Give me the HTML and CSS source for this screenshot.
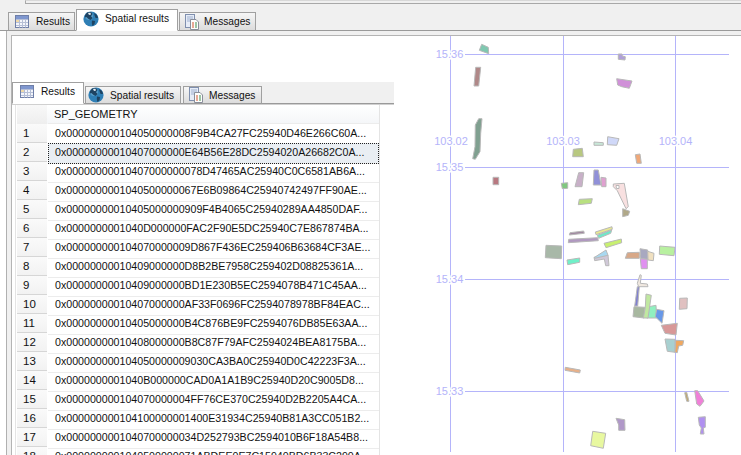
FILE: index.html
```html
<!DOCTYPE html>
<html lang="en">
<head>
<meta charset="utf-8">
<title>Spatial results</title>
<link rel="stylesheet" href="styles.css">
</head>
<body>
<svg class="defs" width="0" height="0" aria-hidden="true">
  <symbol id="i-grid" viewBox="0 0 14 13">
    <rect x="0.5" y="0.5" width="13" height="12" fill="#f4f6fb" stroke="#6f7fa8"/>
    <rect x="1" y="1" width="12" height="3" fill="#7f97cf"/>
    <path d="M1 4.5H13M1 7.5H13M1 10.5H13M4.5 4V12.5M7.5 4V12.5M10.5 4V12.5" stroke="#b6bfd6" fill="none"/>
    <rect x="1" y="5" width="3" height="2" fill="#f0d9a8"/>
  </symbol>
  <symbol id="i-globe" viewBox="0 0 16 16">
    <circle cx="8" cy="8" r="7.6" fill="#2f7fb5"/>
    <circle cx="6" cy="5" r="4" fill="#6fb0d6" opacity=".6"/>
    <path d="M4 1.6 8 1 9.5 3 8 5.2 9.6 7 7.5 9 5.6 8 3.4 6 2 6.5 2 4.2ZM9 9.5 12 10 11.6 13 9.4 15 8.800 12ZM11 2 14 4 15 7 12.6 7 11.6 4.6Z" fill="#1e4362"/>
    <path d="M5 2 7.5 1.8 8 3.4 6 4Z" fill="#e6eef4"/>
  </symbol>
  <symbol id="i-msg" viewBox="0 0 14 16">
    <rect x="0.5" y="0.5" width="9" height="13" fill="#e6ecf7" stroke="#7f8fae"/>
    <path d="M2 3H8M2 5H8M2 7H6" stroke="#9fb0cf" fill="none"/>
    <path d="M5.5 5.5H11L13.5 8V15.5H5.5Z" fill="#fdfdfd" stroke="#8a8f9a"/>
    <path d="M7 9H9M7 11H9M7 13H9" stroke="#d2542e" fill="none"/>
    <path d="M10 9H12M10 11H12M10 13H12" stroke="#3f8f4f" fill="none"/>
  </symbol>
</svg>

<div class="window">
  <div class="top-strip"><div class="top-rule"></div></div>
  <div class="tabs tabs-outer">
    <div class="tab"><svg class="icon icon-grid"><use href="#i-grid"/></svg>Results</div>
    <div class="tab tab-active"><svg class="icon icon-globe"><use href="#i-globe"/></svg>Spatial results</div>
    <div class="tab"><svg class="icon icon-msg"><use href="#i-msg"/></svg>Messages</div>
  </div>
  <div class="tabs-gap"><div class="tabs-gap-inner"></div></div>

  <div class="frame">
    <div class="canvas">
      <svg class="map" viewBox="0 0 741 455" width="741" height="455">
        <g class="grid-lines">
          <path d="M450.5 36V452M563.5 36V452M675.5 36V452"/>
          <path d="M465 54.500H729M465 167.500H729M465 279.500H729M465 391.500H729"/>
        </g>
        <g class="plots">
          <polygon fill="#7fc8b0" points="481.7,44.3 488.3,47.3 488.7,53.7 479.3,50.300"/>
          <polygon fill="#b08888" points="475.7,67.300 480.7,67.300 478.7,86 474,86"/>
          <polygon fill="#80a090" points="478.7,118.700 482,118.700 480.7,133.300 480,151.700 475.3,159.300 472.7,158.700 475,146.700 475.3,125"/>
          <polygon fill="#b0a0d8" points="618.3,54 622,54 622.3,56 625.3,56.700 625,60 618.3,59.300"/>
          <polygon fill="#d090d8" points="616.7,78.700 632,81 629.3,88.300 621.7,86.700 617.7,85"/>
          <polygon fill="#c8e8d8" points="594,142 603.3,142.700 603.3,145.300 594,145.300"/>
          <polygon fill="#d0d8f8" points="607.7,136.700 619,138.700 616.7,145.300 607.3,144.700"/>
          <polygon fill="#f0a878" points="635.3,154.700 640,154 641.3,163.300 636.7,163.300"/>
          <polygon fill="#b8c880" points="573.3,149.300 582.3,148.300 583.3,156.700 572.700,156.700"/>
          <polygon fill="#b87880" points="493,177.300 498.7,177.300 498.7,184.700 493,184.700"/>
          <polygon fill="#80c880" points="561.3,183.300 567.7,182.700 567.7,188.300 562.3,188.700"/>
          <polygon fill="#c8b0c8" points="578.7,172.700 583.7,172.700 582,186.700 575,186.700"/>
          <polygon fill="#9090d8" points="594,170 598.3,170 601,185 593.3,185"/>
          <polygon fill="#e0a0d0" points="601,177.300 606,178 606,186.700 601.700,186.700"/>
          <polygon fill="#f8e0e0" points="613.3,184 624.3,183.300 628.3,206.700 626,208.700 617.3,190.700 613.3,186.700"/>
          <polygon fill="#ffffff" points="616,185.500 619,185.500 619,188.500 616.500,188.500"/>
          <polygon fill="#b0a888" points="622.7,208.700 629.7,211.300 628.300,215.300 622.700,216.700"/>
          <polygon fill="#b8e080" points="579.3,199.300 592.3,198.700 591.3,203.300 578.3,204.700"/>
          <polygon fill="#a088a0" points="570,232.700 583.7,231 584.3,233.300 569.3,235"/>
          <polygon fill="#e8e890" points="595.3,232 612,226.700 612.3,229.300 596,234.700"/>
          <polygon fill="#70e8c8" points="597.3,235.300 611.7,230 610.7,233.300 598.7,238.300"/>
          <polygon fill="#b098c0" points="568.7,239.300 597.7,237.700 598.3,240.700 568.3,242.700"/>
          <polygon fill="#c8f070" points="604,243.300 621.3,239 621.7,242.700 606,247.700"/>
          <polygon fill="#a8b8a8" points="546,245.300 561.7,246 561.3,258.700 545.3,257.700"/>
          <polygon fill="#70f0c8" points="567,260 579.7,258 579.7,262.300 567.7,264.700"/>
          <polygon fill="#d0c8d8" points="594,257.300 608,255 609,265.700 605.7,265.700 604.3,259 594.7,260.700"/>
          <polygon fill="#a8d8f0" points="594,257.700 606,250 608,255.300 594.700,258.300"/>
          <polygon fill="#d8a888" points="627.3,252.700 639.3,252.300 639.300,258.300 625.300,258.300"/>
          <polygon fill="#a8a8c0" points="640,248.700 647.7,250 648,259.300 640.700,258.700"/>
          <polygon fill="#f0e0c0" points="647.7,251.300 654,253.300 653.300,260.700 648,260"/>
          <polygon fill="#e090f0" points="640.3,258.700 647.300,259.300 647.300,268.700 641.300,268.700"/>
          <polygon fill="#b8f0a0" points="659.7,246 675,247.300 674,255.700 659.300,254.300"/>
          <polygon fill="#f0e8e0" points="640,274.700 641.300,275.300 640.300,283.300 647.300,284 648,286.700 638.700,286.700 637.300,283.300"/>
          <polygon fill="#8080d0" points="637.300,286.700 639.300,286.700 637.700,306 634.700,306"/>
          <polygon fill="#a8b8a0" points="634,306.700 645.300,307.300 644,318 633,316.700"/>
          <polygon fill="#90f0c0" points="648.700,306.700 656,305.300 656.700,318 646.700,318"/>
          <polygon fill="#c0e8a0" points="646,294 651.300,295.300 648,318 643.300,318 645.300,307.300"/>
          <polygon fill="#6898e8" points="656.700,309.300 664,310.700 662,323.300 655.300,316.700"/>
          <polygon fill="#d89898" points="661.300,325.300 677.300,323.300 676,335 665,333.300"/>
          <polygon fill="#a8d0d0" points="665,339 675,339.300 675,352.300 667.300,351.300"/>
          <polygon fill="#f0a860" points="675.700,340.300 683.700,340.700 682.700,345.300 678.700,346 677.300,352.700 675,352.300"/>
          <polygon fill="#e0c0c0" points="679.700,298.300 687.300,298 687,308.700 679.300,309.300"/>
          <polygon fill="#e8b088" points="565.300,367.300 580.300,370 579.700,373 565,370.300"/>
          <polygon fill="#c0a870" points="684.700,392.700 686.700,392.300 689,401.300 686.700,401.300"/>
          <polygon fill="#f080d8" points="694.700,390.700 697.700,390.700 704,401 700,406.300 696.700,404"/>
          <polygon fill="#b090f0" points="698.300,417.300 705.300,416.700 705.300,427.300 703.300,428 704,434 700.300,434 701.300,428 699.300,425"/>
          <polygon fill="#b098c8" points="616,418.300 624.700,419.700 625,430.300 618.700,430.300 618.700,425"/>
          <polygon fill="#e8f8a0" points="592.700,431.300 605.700,433.300 603.300,448.300 590.700,445.700"/>
        </g>
        <g class="axis-labels">
          <text x="449.500" y="58">15.36</text>
          <text x="449.500" y="171">15.35</text>
          <text x="449.500" y="283">15.34</text>
          <text x="449.500" y="395">15.33</text>
          <text x="451" y="145">103.02</text>
          <text x="563" y="145">103.03</text>
          <text x="675.500" y="145">103.04</text>
        </g>
      </svg>

      <div class="results">
        <div class="tabs tabs-inner">
          <div class="tab tab-active"><svg class="icon icon-grid"><use href="#i-grid"/></svg>Results</div>
          <div class="tab"><svg class="icon icon-globe"><use href="#i-globe"/></svg>Spatial results</div>
          <div class="tab"><svg class="icon icon-msg"><use href="#i-msg"/></svg>Messages</div>
        </div>
        <div class="table">
          <div class="row row-head"><div class="num"></div><div class="cell">SP_GEOMETRY</div></div>
          <div class="row"><div class="num">1</div><div class="cell">0x000000000104050000008F9B4CA27FC25940D46E266C60A...</div></div>
          <div class="row row-selected"><div class="num">2</div><div class="cell">0x00000000010407000000E64B56E28DC2594020A26682C0A...</div></div>
          <div class="row"><div class="num">3</div><div class="cell">0x00000000010407000000078D47465AC25940C0C6581AB6A...</div></div>
          <div class="row"><div class="num">4</div><div class="cell">0x0000000001040500000067E6B09864C25940742497FF90AE...</div></div>
          <div class="row"><div class="num">5</div><div class="cell">0x00000000010405000000909F4B4065C25940289AA4850DAF...</div></div>
          <div class="row"><div class="num">6</div><div class="cell">0x0000000001040D000000FAC2F90E5DC25940C7E867874BA...</div></div>
          <div class="row"><div class="num">7</div><div class="cell">0x000000000104070000009D867F436EC259406B63684CF3AE...</div></div>
          <div class="row"><div class="num">8</div><div class="cell">0x00000000010409000000D8B2BE7958C259402D08825361A...</div></div>
          <div class="row"><div class="num">9</div><div class="cell">0x00000000010409000000BD1E230B5EC2594078B471C45AA...</div></div>
          <div class="row"><div class="num">10</div><div class="cell">0x00000000010407000000AF33F0696FC2594078978BF84EAC...</div></div>
          <div class="row"><div class="num">11</div><div class="cell">0x00000000010405000000B4C876BE9FC2594076DB85E63AA...</div></div>
          <div class="row"><div class="num">12</div><div class="cell">0x00000000010408000000B8C87F79AFC2594024BEA8175BA...</div></div>
          <div class="row"><div class="num">13</div><div class="cell">0x000000000104050000009030CA3BA0C25940D0C42223F3A...</div></div>
          <div class="row"><div class="num">14</div><div class="cell">0x0000000001040B000000CAD0A1A1B9C25940D20C9005D8...</div></div>
          <div class="row"><div class="num">15</div><div class="cell">0x000000000104070000004FF76CE370C25940D2B2205A4CA...</div></div>
          <div class="row"><div class="num">16</div><div class="cell">0x000000000104100000001400E31934C25940B81A3CC051B2...</div></div>
          <div class="row"><div class="num">17</div><div class="cell">0x0000000001040700000034D252793BC2594010B6F18A54B8...</div></div>
          <div class="row"><div class="num">18</div><div class="cell">0x0000000001040500000071ABDEE0E7C15940BD6B33C290A...</div></div>
        </div>
      </div>
    </div>
  </div>
</div>
</body>
</html>
```

FILE: styles.css
```css
* { box-sizing: border-box; }

html, body { margin: 0; padding: 0; background: #fff; }

body {
  font-family: "Liberation Sans", Arial, sans-serif;
  font-size: 11px;
  color: #111;
}

.defs { display: block; height: 0; }

.window {
  width: 741px;
  height: 455px;
  overflow: hidden;
  display: flex;
  flex-direction: column;
  background: #fff;
}

/* Top strip */
.top-strip {
  height: 4px;
  flex: none;
  background: #f0f0f0;
}

.top-rule {
  height: 4px;
  margin-left: 25px;
  border-left: 1px solid #a8a8a8;
  border-bottom: 1px solid #a8a8a8;
  border-top: 1px solid #d8d8d8;
}

.tabs {
  display: flex;
  align-items: flex-end;
  flex: none;
  background: #f0f0f0;
  border-bottom: 1px solid #9a9a9a;
}

.tabs-outer {
  height: 27px;
  padding-left: 8px;
}

.tabs-gap {
  height: 5px;
  flex: none;
  margin-left: 6px;
  padding-left: 4px;
  background: #f0f0f0;
  border-left: 1px solid #b0b0b0;
}

.tabs-gap-inner {
  height: 5px;
  border-bottom: 1px solid #b4b4b4;
}

.tab {
  display: flex;
  align-items: center;
  height: 19px;
  margin-right: 1px;
  margin-bottom: -1px;
  padding: 0 4px 0 5px;
  font-size: 10.2px;
  white-space: nowrap;
  border: 1px solid #a0a0a0;
  border-bottom-color: #9a9a9a;
  background: linear-gradient(#f6f6f6, #dcdcdc);
}

.tab-active {
  height: 22px;
  background: #fff;
  border-bottom-color: #fff;
  padding-bottom: 3px;
}

.tabs-outer .tab:first-child { width: 67px; }
.tabs-outer .tab:nth-child(2) { width: 102px; padding-left: 6px; }
.tabs-outer .tab:nth-child(3) { width: 77px; }
.tabs-outer .tab:nth-child(3) .icon-msg { margin-right: 5px; }

.icon { flex: none; margin-right: 6px; }
.icon-grid { width: 14px; height: 13px; margin-left: 1px; margin-right: 7px; }
.icon-globe { width: 16px; height: 16px; margin-right: 6px; }
.icon-msg { width: 14px; height: 16px; margin-right: 6px; }

/* Body frame */
.frame {
  flex: 1;
  display: flex;
  min-height: 0;
  margin-left: 6px;
  padding-left: 4px;
  background: #f0f0f0;
  border-left: 1px solid #b0b0b0;
}

.canvas {
  position: relative;
  flex: 1;
  overflow: hidden;
  background: #fff;
  border-left: 1px solid #b4b4b4;
  padding-top: 46px;
}

/* Map drawing */
.map {
  position: absolute;
  left: -12px;
  top: -36px;
}

.grid-lines path {
  fill: none;
  stroke: #b4b4fa;
  stroke-width: 1;
}

.plots { filter: blur(0.3px); }

.plots polygon {
  stroke: #b8b8b8;
  stroke-width: 1;
}

.axis-labels text {
  font-family: "Liberation Sans", Arial, sans-serif;
  font-size: 11px;
  text-anchor: middle;
  fill: #b4b4fa;
  stroke: #fff;
  stroke-width: 3px;
  paint-order: stroke;
}

/* Nested results pane */
.results {
  position: relative;
  width: 382px;
  height: 100%;
  background: #fff;
}

.tabs-inner {
  height: 22px;
  padding-left: 0;
  box-shadow: 0 1px 0 #d0d0d0;
}

.tabs-inner .tab { height: 18px; }
.tabs-inner .tab-active { height: 22px; padding-bottom: 3px; }
.tabs-inner .tab:first-child { width: 72px; padding-left: 6px; }
.tabs-inner .tab:nth-child(2) { width: 96px; margin-right: 2px; padding-left: 2px; }
.tabs-inner .tab:nth-child(3) { width: 79px; padding-left: 5px; }

.table {
  width: 365px;
  margin: 1px 0 0 3px;
  padding-left: 1px;
  border-left: 1px solid #e4e4e4;
  border-right: 1px solid #e4e4e4;
}

.row {
  display: grid;
  grid-template-columns: 30px 1fr;
  height: 19px;
  line-height: 18px;
}

.row-head {
  background: linear-gradient(#fff, #f4f6f8);
}

.row-head .num {
  margin-bottom: 0;
  background: linear-gradient(#f8f8f8, #eeeeee);
  border-bottom: 0;
}

.row-head .cell { padding-left: 6px; font-size: 11px; }

.num {
  margin-bottom: 1px;
  padding-left: 6px;
  font-size: 11.5px;
  background: linear-gradient(#fafafa, #f2f2f2);
  border-bottom: 2px solid #d6d6d6;
}

.cell {
  margin-left: 1px;
  padding-left: 7px;
  font-size: 10.65px;
  white-space: nowrap;
  overflow: hidden;
  border-bottom: 1px solid #ececec;
}

.row-selected .cell {
  background: #e9eef3;
  outline: 1px dotted #222;
  outline-offset: -1px;
}
```
